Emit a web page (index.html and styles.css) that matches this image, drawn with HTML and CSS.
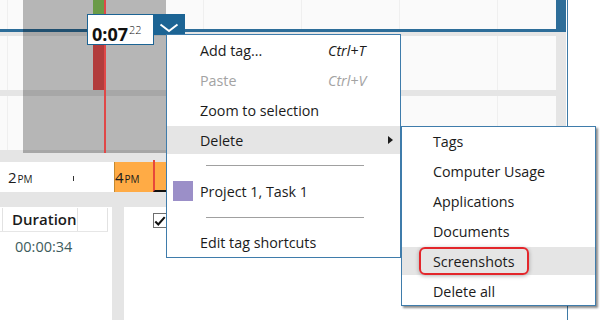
FILE: index.html
```html
<!DOCTYPE html>
<html lang="en">

<head>
    <meta charset="UTF-8">
    <meta name="viewport" content="width=device-width, initial-scale=1.0">
    <title>Timeline - Delete screenshots</title>
    <link rel="stylesheet" href="styles.css">
</head>

<body>
    <div class="app">
        <div class="main">
            <div class="chart">
                <div class="row row-top"></div>
                <div class="row row-mid"></div>
                <div class="row row-low"></div>
            </div>

            <div class="axis">
                <span class="hour">2<small>PM</small></span>
                <span class="tick"></span>
                <div class="busy">
                    <span class="hour">4<small>PM</small></span>
                </div>
                <div class="axis-cursor"></div>
            </div>

            <div class="panels">
                <div class="panel list">
                    <div class="thead">
                        <span class="th th-first"></span>
                        <span class="th th-duration">Duration</span>
                        <span class="th th-last"></span>
                    </div>
                    <div class="cell-duration">00:00:34</div>
                </div>
                <div class="panel detail">
                    <span class="checkbox">
                        <svg width="14" height="12" viewBox="0 0 14 12">
                            <path d="M1.5 6.5 L5 10 L12.5 1.5" fill="none" stroke="#111" stroke-width="2.4" />
                        </svg>
                    </span>
                </div>
            </div>

            <!-- selection drawn over the chart -->
            <div class="selection"></div>
            <div class="bar bar-green"></div>
            <div class="bar bar-red"></div>
            <div class="cursor"></div>

            <div class="time-label">0:07<sup>22</sup></div>
            <div class="time-button">
                <svg width="20" height="10" viewBox="0 0 20 10">
                    <path d="M1.5 1.5 L10 8 L18.5 1.5" fill="none" stroke="#fff" stroke-width="2" />
                </svg>
            </div>
        </div>
        <div class="side"></div>

        <div class="menu">
            <div class="item"><span class="label">Add tag...</span><span class="key">Ctrl+T</span></div>
            <div class="item disabled"><span class="label">Paste</span><span class="key">Ctrl+V</span></div>
            <div class="item"><span class="label">Zoom to selection</span></div>
            <div class="item active"><span class="label">Delete</span><span class="arrow"></span></div>
            <div class="sep"><span></span></div>
            <div class="item item-tag"><span class="swatch"></span><span>Project 1, Task 1</span></div>
            <div class="sep"><span></span></div>
            <div class="item"><span class="label">Edit tag shortcuts</span></div>
        </div>

        <div class="menu submenu">
            <div class="item">Tags</div>
            <div class="item">Computer Usage</div>
            <div class="item">Applications</div>
            <div class="item">Documents</div>
            <div class="item active"><span class="marked">Screenshots</span></div>
            <div class="item">Delete all</div>
        </div>
    </div>
</body>

</html>
```

FILE: styles.css
```css
* {
    box-sizing: border-box;
}

body, html {
    margin: 0;
    padding: 0;
    width: 100%;
    height: 100%;
    overflow: hidden;
    background: #fff;
    font-family: 'Open Sans', 'Noto Sans', sans-serif;
    font-size: 14.3px;
    color: #1b1b1b;
}

.app {
    position: relative;
    display: flex;
    height: 320px;
}

.main {
    position: relative;
    width: 566px;
    display: flex;
    flex-direction: column;
    background: #e5e5e5;
}

.side {
    flex: 1;
    margin-left: 1px;
    border-left: 1px solid #3e7aa6;
}

/* chart rows */

.row {
    height: 54px;
    margin-right: 10px;
    background-color: #fafafa;
    background-image: repeating-linear-gradient(90deg, transparent 0 7px, #efefef 7px 8px, transparent 8px 98px);
}

.row-top {
    height: 32px;
    margin-right: 0;
    border-bottom: 3px solid #2d6d99;
    border-right: 10px solid #2d6d99;
}

.row-mid {
    margin-top: 4px;
}

.row-low {
    margin-top: 6px;
}

/* time axis */

.axis {
    position: relative;
    height: 30px;
    margin-top: 12px;
    margin-right: 10px;
    background: #fff;
    display: flex;
    align-items: center;
}

.hour {
    padding-left: 8px;
    font-size: 15px;
    color: #1b1b1b;
}

.hour small {
    font-size: 10px;
    margin-left: 1px;
}

.tick {
    position: absolute;
    left: 73px;
    top: 14px;
    width: 1px;
    height: 5px;
    background: #333;
}

.busy {
    position: absolute;
    left: 114px;
    top: 0;
    width: 100px;
    height: 30px;
    background: #ffab45;
    border-left: 1px solid #c48a30;
    display: flex;
    align-items: center;
}

.busy .hour {
    padding-left: 0;
}

.axis-cursor {
    position: absolute;
    left: 153px;
    top: -2px;
    width: 60px;
    height: 32px;
    border-left: 2px solid #e8473a;
    border-bottom: 2px solid #111;
}

/* bottom panels */

.panels {
    flex: 1;
    margin-top: 15px;
    display: grid;
    grid-template-columns: 112px 1fr;
    column-gap: 12px;
}

.panel {
    background: #fff;
}

.thead {
    display: flex;
    width: 108px;
    height: 25px;
    padding-top: 1px;
    border-bottom: 1px solid #e6e6e6;
}

.th {
    border-right: 1px solid #e2e2e2;
}

.th-first {
    width: 3px;
}

.th-duration {
    width: 75px;
    padding-left: 9px;
    font-size: 15px;
    font-weight: 600;
    line-height: 23px;
}

.th-last {
    width: 30px;
}

.cell-duration {
    padding-left: 15px;
    line-height: 30px;
    font-size: 14.5px;
    color: #3d5c5c;
}

.checkbox {
    display: flex;
    align-items: center;
    justify-content: center;
    width: 14px;
    height: 15px;
    margin: 6px 0 0 29px;
    border: 1px solid #6e6e6e;
    background: #fff;
}

/* overlays on the chart */

.selection {
    position: absolute;
    left: 23px;
    top: 0;
    width: 143px;
    height: 153px;
    background: rgba(0, 0, 0, 0.27);
}

.bar {
    position: absolute;
    left: 93px;
    width: 11px;
}

.bar-green {
    top: 0;
    height: 14px;
    background: #6b9b47;
}

.bar-red {
    top: 45px;
    height: 45px;
    background: #b23c3c;
}

.cursor {
    position: absolute;
    left: 104px;
    top: 0;
    width: 2px;
    height: 153px;
    background: #e04848;
}

.time-label {
    position: absolute;
    left: 87px;
    top: 14px;
    width: 67px;
    height: 31px;
    padding-left: 4px;
    background: #fff;
    border: 1px solid #1c6494;
    font-size: 18px;
    font-weight: 700;
    line-height: 29px;
    color: #111;
}

.time-label sup {
    font-size: 11px;
    font-weight: 300;
    margin-left: 1px;
    vertical-align: 7px;
}

.time-button {
    position: absolute;
    left: 153px;
    top: 14px;
    width: 32px;
    height: 21px;
    background: #1c6494;
    display: flex;
    justify-content: center;
    align-items: flex-end;
    padding-bottom: 2px;
}

/* context menus */

.menu {
    position: absolute;
    left: 166px;
    top: 34px;
    width: 235px;
    padding: 1px 0;
    display: flex;
    flex-direction: column;
    gap: 2px;
    background: #fff;
    border: 1px solid #3f7cab;
}

.item {
    height: 28px;
    display: flex;
    align-items: center;
    padding-left: 33px;
}

.label {
    width: 128px;
}

.key {
    font-style: italic;
}

.disabled {
    color: #a3a3a3;
}

.active {
    background: #e5e5e5;
}

.arrow {
    margin-left: auto;
    margin-right: 7px;
    border-left: 5px solid #1b1b1b;
    border-top: 4px solid transparent;
    border-bottom: 4px solid transparent;
}

.item-tag {
    height: 30px;
    padding-left: 6px;
    gap: 7px;
}

.swatch {
    width: 20px;
    height: 20px;
    background: #9b8fc8;
}

.sep {
    height: 18px;
    display: flex;
    align-items: center;
    padding: 0 36px 0 39px;
}

.sep span {
    flex: 1;
    height: 1px;
    background: #a0a0a0;
}

.submenu {
    left: 401px;
    top: 126px;
    width: 195px;
    padding: 0;
    box-shadow: 2px 2px 2px rgba(0, 0, 0, 0.45);
}

.submenu .item {
    padding-left: 31px;
}

.marked {
    display: flex;
    align-items: center;
    height: 28px;
    margin-left: -14px;
    padding: 0 13px 0 12px;
    border: 2px solid #e3262b;
    border-radius: 6px;
    box-shadow: 0 1px 4px rgba(0, 0, 0, 0.3);
}
```
